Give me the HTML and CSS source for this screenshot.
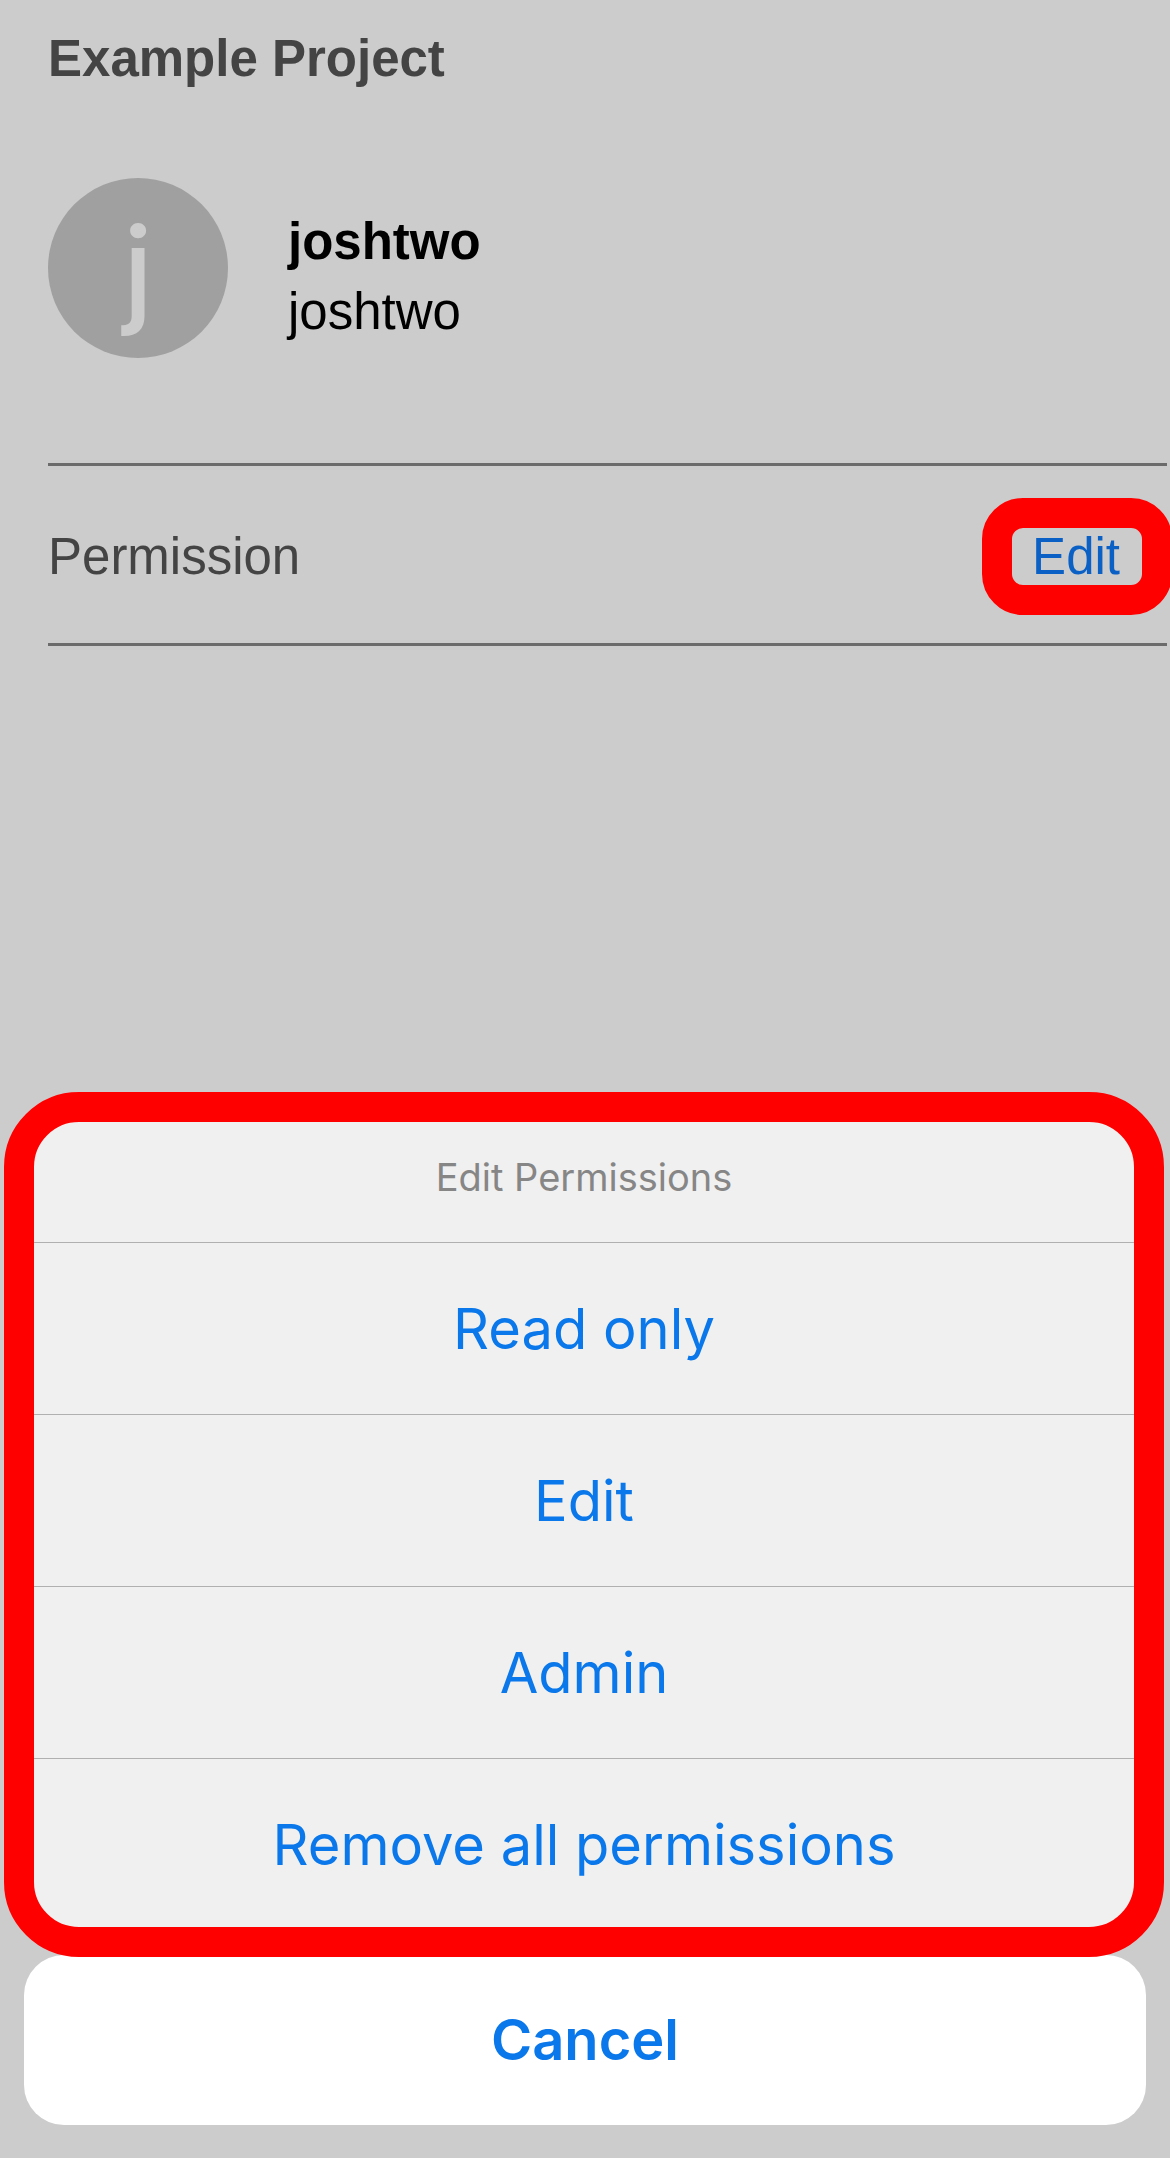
FILE: index.html
```html
<!DOCTYPE html>
<html lang="en">
<head>
<meta charset="utf-8">
<meta name="viewport" content="width=device-width, initial-scale=1">
<title>Example Project</title>
<link rel="stylesheet" href="styles.css">
</head>
<body>
<div class="screen">
  <main class="member">
    <h1 class="project">Example Project</h1>
    <section class="profile">
      <div class="avatar" aria-hidden="true">j</div>
      <div class="names">
        <strong class="display-name">joshtwo</strong>
        <span>joshtwo</span>
      </div>
    </section>
    <section class="permission">
      <span class="permission-label">Permission</span>
      <button type="button" class="permission-value">Edit</button>
    </section>
  </main>
  <div class="sheet" role="dialog" aria-labelledby="sheet-title">
    <div class="options">
      <h2 class="sheet-title" id="sheet-title">Edit Permissions</h2>
      <button type="button" class="option">Read only</button>
      <button type="button" class="option">Edit</button>
      <button type="button" class="option">Admin</button>
      <button type="button" class="option">Remove all permissions</button>
    </div>
    <button type="button" class="cancel">Cancel</button>
  </div>
</div>
</body>
</html>
```
FILE: styles.css
```css
* {
  box-sizing: border-box;
}

body {
  margin: 0;
  background: #ccc;
  font-family: "Liberation Sans", Arial, sans-serif;
  font-size: 51px;
  line-height: 70px;
  color: #000;
}

button {
  margin: 0;
  padding: 0;
  border: 0;
  background: none;
  font: inherit;
  cursor: pointer;
}

.screen {
  display: flex;
  flex-direction: column;
  gap: 48px;
  min-height: 100vh;
}

.member {
  padding: 24px 3px 0 48px;
  overflow-x: clip;
}

.project {
  margin: 0;
  font-size: 51px;
  font-weight: 700;
  color: #444;
}

.profile {
  display: flex;
  align-items: center;
  gap: 60px;
  padding: 84px 0 105px;
}

.avatar {
  flex: none;
  width: 180px;
  height: 180px;
  border-radius: 50%;
  background: #a0a0a0;
  color: #ccc;
  font-family: Inter, sans-serif;
  font-size: 118px;
  font-weight: 500;
  line-height: 182px;
  text-align: center;
}

.names {
  display: flex;
  flex-direction: column;
  padding-top: 18px;
}

.permission {
  display: flex;
  align-items: center;
  justify-content: space-between;
  padding: 62px 25px 58px 0;
  border-top: 3px solid #6b6b6b;
  border-bottom: 3px solid #6b6b6b;
}

.permission-label,
.permission-value {
  line-height: 57px;
}

.permission-label {
  color: #444;
}

/* The ring reaches past the row's content without taking up space in it. */
.permission-value {
  margin: -30px;
  padding: 0 22px 0 20px;
  border: 30px solid #f00;
  border-radius: 41px;
  color: #0a60c5;
}

.sheet {
  display: flex;
  flex-direction: column;
  margin-top: auto;
  padding: 0 6px 33px 4px;
  font-family: Inter, sans-serif;
  text-align: center;
}

.options {
  position: relative;
  z-index: 1;
  display: flex;
  flex-direction: column;
  border: 30px solid #f00;
  border-radius: 75px;
  background: #f0f0f0;
}

.sheet-title {
  margin: 0;
  padding: 30px 0 40px;
  font-size: 38px;
  font-weight: 400;
  line-height: 50px;
  color: #868686;
}

.option {
  padding: 51px 0 50px;
  border-top: 1px solid #b0b0b0;
  font-size: 56px;
  color: #0a78ea;
}

.option:last-child {
  padding-bottom: 47px;
}

.cancel {
  margin: -2px 18px 0 20px;
  padding: 50px 0;
  border-radius: 40px;
  background: #fff;
  font-size: 56px;
  font-weight: 600;
  color: #0a78ea;
}
```
